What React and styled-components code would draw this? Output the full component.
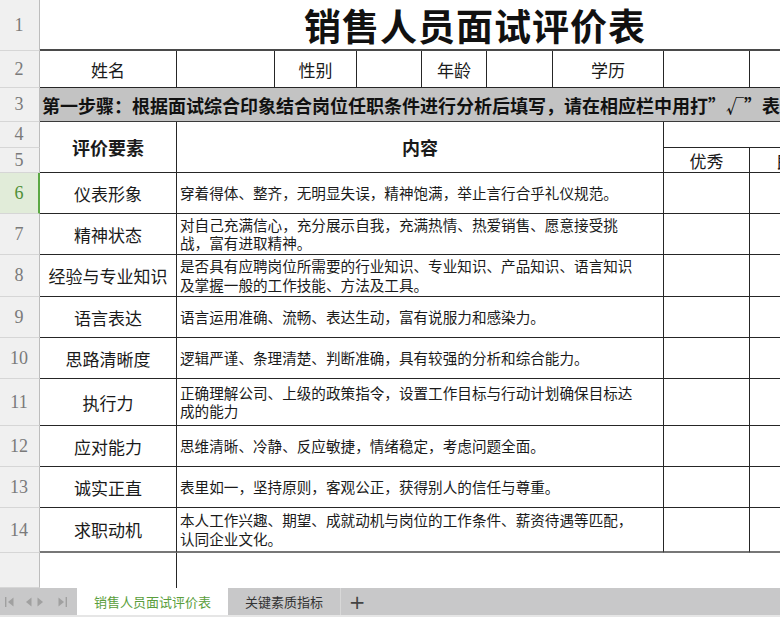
import React from 'react';
import styled, { createGlobalStyle } from 'styled-components';

const GlobalStyle = createGlobalStyle`
    html, body {
        margin : 0;
        padding : 0;
        background : #ffffff;
        overflow : hidden;
    }
`;

const Screen = styled.div`
    width : 780px;
    height : 617px;
    overflow : hidden;
    display : flex;
    flex-direction : column;
    font-family : "Noto Sans CJK SC", "Noto Sans", sans-serif;
    color : #1a1a1a;
`;

const Sheet = styled.div`
    flex : 0 0 588px;
    width : 910px;
    display : grid;
    grid-template-columns : 40px 137px 98px 82px 65px 65px 66px 111px 86px 86px 74px;
    grid-template-rows : 51px 37px 34px 26px 25px 41px 41px 42px 41px 41px 47px 41px 41px 45px 35px;
`;

const RowHead = styled.div`
    grid-column : 1;
    grid-row : ${p => p.$row};
    box-sizing : border-box;
    background : ${p => (p.$active ? '#e1ecd9' : '#f0f0f0')};
    border-bottom : 1px solid #d6d6d6;
    border-right : ${p => (p.$active ? '2px solid #5ba843' : '1px solid #bdbdbd')};
    display : flex;
    align-items : center;
    justify-content : center;
    font-family : "Liberation Serif", "DejaVu Serif", serif;
    font-size : 18px;
    color : ${p => (p.$active ? '#4f8f36' : '#7a7a7a')};
    padding-right : ${p => (p.$active ? '0' : '1px')};
`;

const Cell = styled.div`
    grid-column : ${p => p.$col} / span ${p => p.$span || 1};
    grid-row : ${p => p.$row} / span ${p => p.$rows || 1};
    box-sizing : border-box;
    border-right : 1px solid #262626;
    border-bottom : ${p => (p.$thick ? '2px solid #777777' : '1px solid #262626')};
    display : flex;
    align-items : center;
    justify-content : ${p => (p.$left ? 'flex-start' : 'center')};
    padding-left : ${p => (p.$left ? '3px' : '0')};
    font-size : ${p => p.$size || 17}px;
    font-weight : ${p => (p.$bold ? 700 : 400)};
    white-space : nowrap;
    overflow : visible;
`;

const Title = styled.div`
    grid-column : 2 / span 10;
    grid-row : 1;
    box-sizing : border-box;
    border-bottom : 2px solid #4a4a4a;
    display : flex;
    align-items : center;
    justify-content : center;
    font-size : 37px;
    font-weight : 700;
    letter-spacing : 1px;
    color : #111111;
`;

const StepNote = styled.div`
    grid-column : 2 / span 10;
    grid-row : 3;
    box-sizing : border-box;
    background : #c3c3c3;
    border-bottom : 1px solid #3a3a3a;
    display : flex;
    align-items : center;
    padding-left : 2px;
    font-size : 18px;
    font-weight : 700;
    white-space : nowrap;
    color : #111111;
`;

const Content = styled.div`
    font-size : 14.6px;
    line-height : 18.5px;
    color : #1a1a1a;
`;

const EmptyLead = styled.div`
    grid-column : 2;
    grid-row : 15;
    border-right : 1px solid #262626;
`;

const TabBar = styled.div`
    flex : 0 0 27px;
    background : #c8c8c9;
    display : flex;
    align-items : stretch;
`;

const Nav = styled.div`
    width : 77px;
    flex : 0 0 77px;
    display : flex;
    align-items : center;
    padding-left : 4px;
    box-sizing : border-box;
`;

const NavGap = styled.span`
    flex : 0 0 ${p => p.$w}px;
`;

const Tab = styled.div`
    padding : 0 17px;
    display : flex;
    align-items : center;
    font-size : 13px;
    background : ${p => (p.$active ? '#ffffff' : 'transparent')};
    color : ${p => (p.$active ? '#5a9e3c' : '#333333')};
    border-right : ${p => (p.$active ? 'none' : '1px solid #d8d8d8')};
`;

const AddTab = styled.div`
    width : 32px;
    display : flex;
    align-items : center;
    justify-content : center;
    font-size : 20px;
    color : #444444;
    font-family : "DejaVu Sans", sans-serif;
`;

const Strip = styled.div`
    flex : 0 0 2px;
    background : #e6e6e6;
`;

const NavSvg = styled.svg`
    flex : 0 0 auto;
    display : block;
`;

const NavIcon = ({ kind }) => {
    const c = '#a0a0a0';
    const wide = kind === 'first' || kind === 'last';
    return (
        <NavSvg width={wide ? 11 : 9} height="12" viewBox={wide ? '0 0 11 12' : '0 0 9 12'}>
            {kind === 'first' && <><rect x="1" y="1" width="1.4" height="10" fill={c} /><path d="M9.5 1.5 L4 6 L9.5 10.5 Z" fill={c} /></>}
            {kind === 'prev' && <path d="M7.5 1.5 L2 6 L7.5 10.5 Z" fill={c} />}
            {kind === 'next' && <path d="M1.5 1.5 L7 6 L1.5 10.5 Z" fill={c} />}
            {kind === 'last' && <><path d="M1.5 1.5 L7 6 L1.5 10.5 Z" fill={c} /><rect x="8.6" y="1" width="1.4" height="10" fill={c} /></>}
        </NavSvg>
    );
};

const items = [
    ['仪表形象', ['穿着得体、整齐，无明显失误，精神饱满，举止言行合乎礼仪规范。']],
    ['精神状态', ['对自己充满信心，充分展示自我，充满热情、热爱销售、愿意接受挑', '战，富有进取精神。']],
    ['经验与专业知识', ['是否具有应聘岗位所需要的行业知识、专业知识、产品知识、语言知识', '及掌握一般的工作技能、方法及工具。']],
    ['语言表达', ['语言运用准确、流畅、表达生动，富有说服力和感染力。']],
    ['思路清晰度', ['逻辑严谨、条理清楚、判断准确，具有较强的分析和综合能力。']],
    ['执行力', ['正确理解公司、上级的政策指令，设置工作目标与行动计划确保目标达', '成的能力']],
    ['应对能力', ['思维清晰、冷静、反应敏捷，情绪稳定，考虑问题全面。']],
    ['诚实正直', ['表里如一，坚持原则，客观公正，获得别人的信任与尊重。']],
    ['求职动机', ['本人工作兴趣、期望、成就动机与岗位的工作条件、薪资待遇等匹配，', '认同企业文化。']],
];

const App = () => {
    const rows = Array.from({ length: 15 }, (_, i) => i + 1);
    return (
        <Screen>
            <GlobalStyle />
            <Sheet>
                {rows.map(r => (
                    <RowHead key={r} $row={r} $active={r === 6}>{r === 15 ? '' : r}</RowHead>
                ))}

                <Title>销售人员面试评价表</Title>

                <Cell $col={2} $row={2}>姓名</Cell>
                <Cell $col={3} $row={2} />
                <Cell $col={4} $row={2}>性别</Cell>
                <Cell $col={5} $row={2} />
                <Cell $col={6} $row={2}>年龄</Cell>
                <Cell $col={7} $row={2} />
                <Cell $col={8} $row={2}>学历</Cell>
                <Cell $col={9} $row={2} />
                <Cell $col={10} $row={2} $span={2}>应聘岗位</Cell>

                <StepNote>第一步骤：根据面试综合印象结合岗位任职条件进行分析后填写，请在相应栏中用打”√”表示</StepNote>

                <Cell $col={2} $row={4} $rows={2} $bold $size={18}>评价要素</Cell>
                <Cell $col={3} $row={4} $rows={2} $span={6} $bold $size={18}>内容</Cell>
                <Cell $col={9} $row={4} $span={3} />
                <Cell $col={9} $row={5}>优秀</Cell>
                <Cell $col={10} $row={5}>良好</Cell>
                <Cell $col={11} $row={5}>一般</Cell>

                {items.map(([label, lines], i) => {
                    const r = i + 6;
                    const last = i === items.length - 1;
                    return (
                        <React.Fragment key={label}>
                            <Cell $col={2} $row={r} $thick={last}>{label}</Cell>
                            <Cell $col={3} $row={r} $span={6} $left $thick={last}>
                                <Content>
                                    {lines.map(l => <div key={l}>{l}</div>)}
                                </Content>
                            </Cell>
                            <Cell $col={9} $row={r} $thick={last} />
                            <Cell $col={10} $row={r} $thick={last} />
                            <Cell $col={11} $row={r} $thick={last} />
                        </React.Fragment>
                    );
                })}

                <EmptyLead />
            </Sheet>

            <TabBar>
                <Nav>
                    <NavIcon kind="first" />
                    <NavGap $w={9} />
                    <NavIcon kind="prev" />
                    <NavGap $w={3} />
                    <NavIcon kind="next" />
                    <NavGap $w={12} />
                    <NavIcon kind="last" />
                </Nav>
                <Tab $active>销售人员面试评价表</Tab>
                <Tab>关键素质指标</Tab>
                <AddTab>+</AddTab>
            </TabBar>
            <Strip />
        </Screen>
    );
};

export default App;
